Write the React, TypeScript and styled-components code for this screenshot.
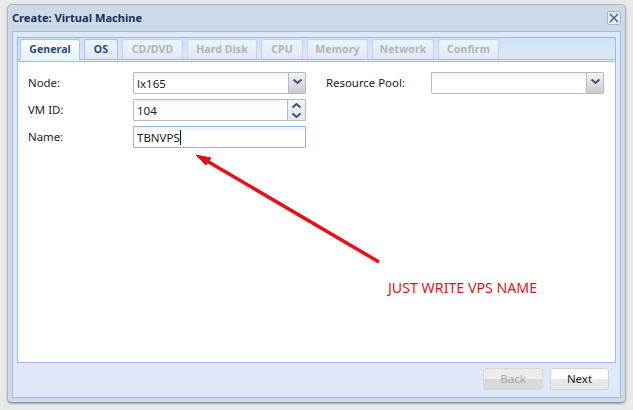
import styled, { createGlobalStyle } from 'styled-components';

const GlobalStyle = createGlobalStyle`
  html, body {
    margin: 0;
    padding: 0;
    background: #e9e9e7;
    font-family: "Noto Sans", "Liberation Sans", sans-serif;
  }
`;

const Page = styled.div`
  position: relative;
  width: 633px;
  height: 410px;
  padding: 4px 7px 7px 7px;
  box-sizing: border-box;
  overflow: hidden;
`;

const Window = styled.div`
  height: 100%;
  box-sizing: border-box;
  display: flex;
  flex-direction: column;
  background: #ced9e7;
  border: 1px solid #a9b6c6;
  border-bottom-color: #8b98a8;
  border-radius: 5px;
  box-shadow: 0 1px 2px #9aa3ad;
  padding: 0 4px 4px;
`;

const TitleBar = styled.div`
  height: 26px;
  flex: none;
  box-sizing: border-box;
  display: flex;
  align-items: center;
  justify-content: space-between;
  padding: 0 0 1px 0;
`;

const Title = styled.span`
  color: #15325c;
  font-size: 11.1px;
  font-weight: 700;
`;

const CloseButton = styled.span`
  width: 12px;
  height: 12px;
  display: flex;
  align-items: center;
  justify-content: center;
  background: #e4edf8;
  border: 1px solid #9db8d8;
  border-radius: 2px;
`;

const Frame = styled.div`
  flex: 1;
  min-height: 0;
  display: flex;
  flex-direction: column;
  background: #dfe8f6;
  border: 1px solid #99bbe8;
  padding: 5px 4px 0;
`;

const TabPanel = styled.div`
  flex: 1;
  min-height: 0;
  display: flex;
  flex-direction: column;
  border: 1px solid #99bbe8;
  background: #fff;
`;

const TabStrip = styled.div`
  height: 21px;
  flex: none;
  display: flex;
  align-items: flex-end;
  gap: 4px;
  padding: 0 0 0 2px;
  background: linear-gradient(#cfe0f5, #dce8f8);
  border-bottom: 1px solid #99bbe8;
`;

const Tab = styled.div<{ $width: number; $active?: boolean; $disabled?: boolean }>`
  width: ${(p) => p.$width}px;
  height: ${(p) => (p.$active ? 21 : 20)}px;
  box-sizing: border-box;
  display: flex;
  align-items: center;
  justify-content: center;
  padding-bottom: ${(p) => (p.$active ? 2 : 1)}px;
  font-size: 10.5px;
  font-weight: 700;
  letter-spacing: 0.1px;
  color: ${(p) => (p.$disabled ? '#b5b3b5' : '#2e4a73')};
  background: ${(p) => (p.$active ? 'linear-gradient(#fff, #e9f1fb)' : 'linear-gradient(#eef4fc, #dde8f8)')};
  border: 1px solid ${(p) => (p.$disabled ? '#c3d6ee' : '#a8c4ea')};
  border-bottom: 0;
  border-radius: 3px 3px 0 0;
  margin-bottom: ${(p) => (p.$active ? -1 : 0)}px;
  z-index: ${(p) => (p.$active ? 1 : 0)};
`;

const StripEdge = styled.div`
  height: 1px;
  flex: none;
  background: #e9f1fb;
  border-bottom: 1px solid #99bbe8;
`;

const Content = styled.div`
  flex: 1;
  min-height: 0;
  display: grid;
  grid-template-columns: 105px 173px 1fr;
  grid-auto-rows: 22px;
  row-gap: 5px;
  padding: 10px 10px 0 10px;
  background: #fff;
`;

const Label = styled.label`
  display: flex;
  align-items: center;
  padding-bottom: 2px;
  font-size: 11.4px;
  color: #1a1a1a;
`;

const RightGroup = styled.div`
  display: flex;
  align-items: center;
  padding-left: 20px;
`;

const RightLabel = styled(Label)`
  width: 105px;
  flex: none;
`;

const Field = styled.div<{ $focused?: boolean }>`
  width: 173px;
  height: 22px;
  box-sizing: border-box;
  display: flex;
  background: linear-gradient(#f1f4f8, #fff 7px);
  border: 1px solid ${(p) => (p.$focused ? '#8db5dc' : '#b5b8c8')};
  border-radius: 1px;
`;

const Value = styled.span`
  flex: 1;
  display: flex;
  align-items: center;
  padding-left: 3px;
  font-size: 11.5px;
  color: #1a1a1a;
`;

const Caret = styled.span`
  width: 1px;
  height: 15px;
  background: #111;
`;

const Trigger = styled.span`
  width: 17px;
  flex: none;
  display: flex;
  align-items: center;
  justify-content: center;
  padding-bottom: 3px;
  box-sizing: border-box;
  background: linear-gradient(#f3f4f6, #c9cbcc);
  border-left: 1px solid #b5b8c8;
`;

const Spinner = styled.span`
  width: 17px;
  flex: none;
  display: flex;
  flex-direction: column;
  align-items: center;
  justify-content: center;
  gap: 3px;
  background: linear-gradient(#f1f5fa, #e3e8ef);
  border-left: 1px solid #b5b8c8;
`;

const Footer = styled.div`
  height: 34px;
  flex: none;
  display: flex;
  justify-content: flex-end;
  align-items: flex-start;
  gap: 7px;
  padding: 5px 7px 0 0;
  box-sizing: border-box;
`;

const Button = styled.div<{ $disabled?: boolean }>`
  width: ${(p) => (p.$disabled ? 60 : 59)}px;
  height: 22px;
  box-sizing: border-box;
  display: flex;
  align-items: center;
  justify-content: center;
  padding-bottom: 2px;
  font-size: 11.5px;
  color: ${(p) => (p.$disabled ? '#a4a6a8' : '#222')};
  background: ${(p) =>
    p.$disabled
      ? 'linear-gradient(#ececec 50%, #d9d9d9 50%)'
      : 'linear-gradient(#fff 50%, #e8e8e8 50%)'};
  border: 1px solid ${(p) => (p.$disabled ? '#d3d7dc' : '#d0d4da')};
  border-radius: 3px;
`;

const Annotation = styled.span`
  position: absolute;
  left: 388px;
  top: 278px;
  color: #dd1420;
  font-size: 14.2px;
  white-space: nowrap;
`;

const ArrowOverlay = styled.svg`
  position: absolute;
  left: 190px;
  top: 148px;
`;

const Chevron = ({ up }: { up?: boolean }) => (
  <svg width="11" height="7" viewBox="0 0 11 7">
    <path
      d={up ? 'M1.5 5.5 5.5 2l4 3.5' : 'M1.5 1.5 5.5 5l4-3.5'}
      fill="none"
      stroke="#3d4f78"
      strokeWidth="2"
    />
  </svg>
);

const tabs = [
  { name: 'General', width: 60, active: true },
  { name: 'OS', width: 34 },
  { name: 'CD/DVD', width: 61, disabled: true },
  { name: 'Hard Disk', width: 70, disabled: true },
  { name: 'CPU', width: 42, disabled: true },
  { name: 'Memory', width: 61, disabled: true },
  { name: 'Network', width: 62, disabled: true },
  { name: 'Confirm', width: 61, disabled: true },
];

export default function App() {
  return (
    <Page>
      <GlobalStyle />
      <Window>
        <TitleBar>
          <Title>Create: Virtual Machine</Title>
          <CloseButton>
            <svg width="10" height="10" viewBox="0 0 10 10">
              <path d="M1 1l8 8M9 1 1 9" stroke="#33598f" strokeWidth="1.3" />
            </svg>
          </CloseButton>
        </TitleBar>
        <Frame>
          <TabPanel>
            <TabStrip>
              {tabs.map((t) => (
                <Tab key={t.name} $width={t.width} $active={t.active} $disabled={t.disabled}>
                  {t.name}
                </Tab>
              ))}
            </TabStrip>
            <StripEdge />
            <Content>
              <Label>Node:</Label>
              <Field>
                <Value>lx165</Value>
                <Trigger>
                  <Chevron />
                </Trigger>
              </Field>
              <RightGroup>
                <RightLabel>Resource Pool:</RightLabel>
                <Field>
                  <Value />
                  <Trigger>
                    <Chevron />
                  </Trigger>
                </Field>
              </RightGroup>
              <Label>VM ID:</Label>
              <Field>
                <Value>104</Value>
                <Spinner>
                  <Chevron up />
                  <Chevron />
                </Spinner>
              </Field>
              <span />
              <Label>Name:</Label>
              <Field $focused>
                <Value>
                  TBNVPS
                  <Caret />
                </Value>
              </Field>
            </Content>
          </TabPanel>
          <Footer>
            <Button $disabled>Back</Button>
            <Button>Next</Button>
          </Footer>
        </Frame>
      </Window>
      <ArrowOverlay width="200" height="120" viewBox="0 0 200 120">
        <path d="M189 114 17 13" stroke="#ea0f14" strokeWidth="3.5" fill="none" />
        <path d="M6 7 21 10 16 17Z" fill="#ea0f14" stroke="#ea0f14" strokeWidth="1" />
      </ArrowOverlay>
      <Annotation>JUST WRITE VPS NAME</Annotation>
    </Page>
  );
}
